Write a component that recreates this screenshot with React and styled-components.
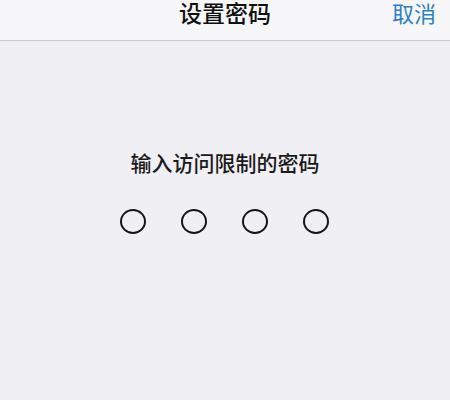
import React from 'react';
import styled, { createGlobalStyle } from 'styled-components';

const GlobalStyle = createGlobalStyle`
  html, body {
    margin: 0;
    padding: 0;
    background: #efeff4;
  }
  body {
    font-family: "Noto Sans CJK SC", "Noto Sans", sans-serif;
  }
`;

const Page = styled.div`
  width: 450px;
  height: 400px;
  background: #efeff4;
  overflow: hidden;
`;

const NavBar = styled.header`
  position: relative;
  display: flex;
  align-items: flex-start;
  justify-content: center;
  height: 40px;
  background: #f7f7f9;
  border-bottom: 1px solid #c9c9ce;
  box-sizing: content-box;
`;

const Title = styled.h1`
  margin: 0;
  font-size: 23px;
  font-weight: 500;
  line-height: 25px;
  color: #111;
`;

const Cancel = styled.button`
  position: absolute;
  right: 14px;
  top: 0;
  padding: 0;
  border: 0;
  background: none;
  font-family: inherit;
  font-size: 22px;
  line-height: 25px;
  color: #2f7fc1;
`;

const Body = styled.main`
  display: flex;
  flex-direction: column;
  align-items: center;
  padding-top: 107px;
`;

const Prompt = styled.p`
  margin: 0;
  font-size: 21px;
  font-weight: 500;
  line-height: 28px;
  color: #1a1a1a;
`;

const Dots = styled.div`
  display: flex;
  gap: 35px;
  margin-top: 33px;
  margin-left: -2px;
`;

const Dot = styled.span`
  width: 22px;
  height: 21px;
  border: 2px solid #151515;
  border-radius: 50%;
  background: ${(p) => (p.filled ? '#151515' : 'transparent')};
`;

export default function App() {
  const entered = 0;
  return (
    <Page>
      <GlobalStyle />
      <NavBar>
        <Title>设置密码</Title>
        <Cancel>取消</Cancel>
      </NavBar>
      <Body>
        <Prompt>输入访问限制的密码</Prompt>
        <Dots>
          {[0, 1, 2, 3].map((i) => (
            <Dot key={i} filled={i < entered} />
          ))}
        </Dots>
      </Body>
    </Page>
  );
}
